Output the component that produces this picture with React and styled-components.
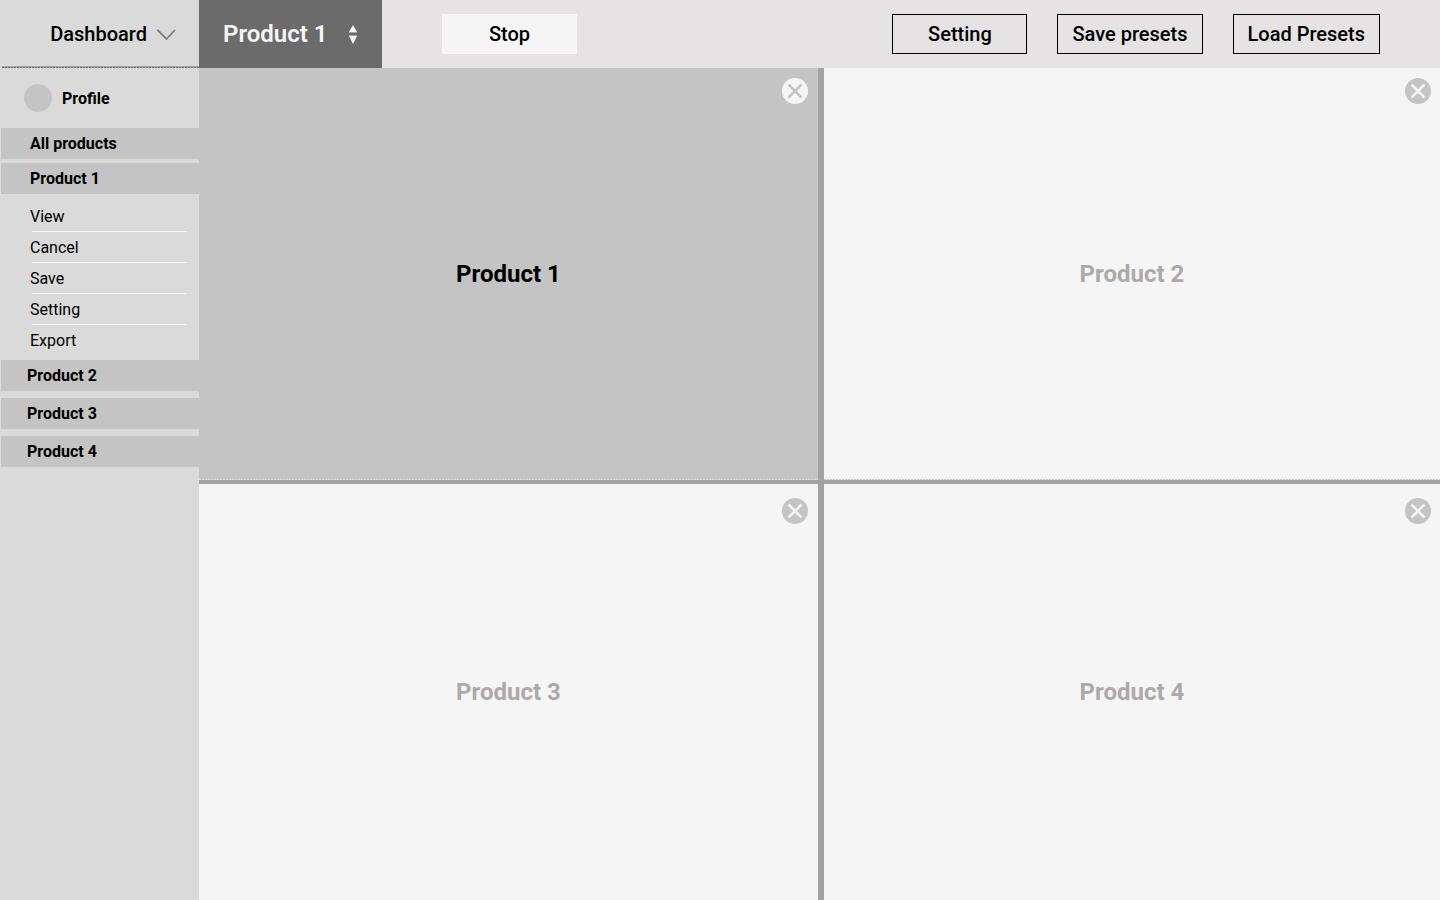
import styled, { createGlobalStyle } from "styled-components";
import { useState } from "react";

const GlobalStyle = createGlobalStyle`
  * {
    box-sizing: border-box;
  }
  body {
    margin: 0;
    font-family: Roboto, "Liberation Sans", sans-serif;
    color: #000;
    background-color: #dadada;
  }
  button {
    font-family: inherit;
    color: inherit;
    padding: 0;
    border: none;
    background: none;
    cursor: pointer;
  }
  ul {
    list-style: none;
    margin: 0;
    padding: 0;
  }
`

const Page = styled.div`
  display: grid;
  grid-template-columns: 199px 1fr;
  grid-template-rows: 68px 1fr;
  min-height: 100vh;
`

const DashboardButton = styled.button`
  display: flex;
  align-items: center;
  justify-content: flex-end;
  gap: 9px;
  padding-right: 23px;
  margin-left: 2px;
  font-size: 20px;
  font-weight: 500;
  background: repeating-linear-gradient(90deg, #6f6868 0 2px, #a9a3a3 2px 3px) bottom / 100% 1px no-repeat,
    linear-gradient(#a9a3a3, #a9a3a3) bottom / 100% 2px no-repeat;
`

const Topbar = styled.header`
  display: flex;
  align-items: center;
  padding-right: 60px;
  background-color: #e5e3e4;
`

const ProductPicker = styled.button`
  display: flex;
  align-items: center;
  align-self: stretch;
  justify-content: space-between;
  width: 183px;
  padding: 0 24px;
  font-size: 24px;
  font-weight: 600;
  color: #f5f5f5;
  background-color: #6b6b6b;
`

const StopButton = styled.button`
  width: 135px;
  height: 40px;
  margin-left: 60px;
  font-size: 20px;
  font-weight: 500;
  background-color: #f5f5f5;
`

const Actions = styled.div`
  display: flex;
  gap: 30px;
  margin-left: auto;
`

const ActionButton = styled.button`
  min-width: 135px;
  height: 40px;
  padding: 0 14px;
  font-size: 20px;
  font-weight: 500;
  border: 1px solid #000;
`

const Sidebar = styled.nav`
  padding-left: 1px;
`

const Profile = styled.a`
  display: flex;
  align-items: center;
  gap: 10px;
  height: 60px;
  padding-left: 23px;
  font-size: 16px;
  font-weight: 700;
  color: inherit;
  text-decoration: none;
`

const Avatar = styled.span`
  width: 28px;
  height: 28px;
  border-radius: 50%;
  background-color: #c4c4c4;
`

const MenuList = styled.ul`
  display: grid;
  gap: ${(props) => props.$gap}px;
`

const MenuButton = styled.button`
  display: block;
  width: 100%;
  height: 31px;
  padding-left: ${(props) => props.$indent}px;
  font-size: 16px;
  font-weight: 700;
  text-align: left;
  background-color: #c4c4c4;
`

const SubMenu = styled.ul`
  padding: 7px 12px 4px 29px;
`

const SubItem = styled.li`
  height: 31px;
  &:not(:last-child)::after {
    content: "";
    display: block;
    height: 1px;
    margin-left: 2px;
    background-color: #f5f5f5;
  }
`

const SubButton = styled.button`
  display: block;
  width: 100%;
  height: 30px;
  font-size: 16px;
  text-align: left;
`

const Board = styled.main`
  display: grid;
  grid-template-columns: 619fr 616fr;
  grid-template-rows: 412fr 416fr;
  gap: 4px 6px;
  background-color: #a2a2a2;
`

const Tile = styled.section`
  position: relative;
  display: flex;
  align-items: center;
  justify-content: center;
  color: ${(props) => props.$active ? "#000" : "#aea9a9"};
  background-color: ${(props) => props.$active ? "#c4c4c4" : "#f5f5f5"};
  &:nth-child(-n + 2) {
    background-image: repeating-linear-gradient(90deg, ${(props) => props.$active ? "#dedede" : "#c4c4c4"} 0 2px, transparent 2px 3px);
    background-position: bottom;
    background-size: 100% 1px;
    background-repeat: no-repeat;
  }
`

const TileTitle = styled.h2`
  margin: 0;
  font-size: 24px;
  font-weight: 700;
`

const CloseButton = styled.button`
  position: absolute;
  top: ${(props) => props.$top}px;
  right: ${(props) => props.$right}px;
  display: flex;
  color: ${(props) => props.$active ? "#f5f5f5" : "#c4c4c4"};
`

const ChevronIcon = () => (
    <svg width="20" height="12" viewBox="0 0 20 12" fill="none" stroke="#7f7f7f" strokeWidth="1.8" aria-hidden="true">
        <path d="M1.5 2L10.5 11L19 2" />
    </svg>
)

const SortIcon = () => (
    <svg width="10" height="20" viewBox="0 0 10 20" fill="currentColor" aria-hidden="true">
        <path d="M5 1L9 8H1Z" />
        <path d="M5 20L9 12H1Z" />
        <path d="M1 8H9V9H1ZM1 11H9V12H1Z" fill="#a9a3a3" />
    </svg>
)

const CloseIcon = ({ cross }) => (
    <svg width="26" height="26" viewBox="0 0 26 26" aria-hidden="true">
        <circle cx="13" cy="13" r="13" fill="currentColor" />
        <path d="M6.5 6.5L19.5 19.5M19.5 6.5L6.5 19.5" stroke={cross} strokeWidth="2.5" />
    </svg>
)

const subItems = ["View", "Cancel", "Save", "Setting", "Export"]

const tiles = [
    { name: "Product 1", top: 10, right: 10 },
    { name: "Product 2", top: 10, right: 9 },
    { name: "Product 3", top: 14, right: 10 },
    { name: "Product 4", top: 14, right: 9 },
]

export default function App() {

    const [selected, setSelected] = useState("Product 1")

    return (
        <>
            <GlobalStyle />
            <Page>
                <DashboardButton>Dashboard<ChevronIcon /></DashboardButton>
                <Topbar>
                    <ProductPicker>{selected}<SortIcon /></ProductPicker>
                    <StopButton>Stop</StopButton>
                    <Actions>
                        <ActionButton>Setting</ActionButton>
                        <ActionButton>Save presets</ActionButton>
                        <ActionButton>Load Presets</ActionButton>
                    </Actions>
                </Topbar>
                <Sidebar>
                    <Profile href="#profile"><Avatar />Profile</Profile>
                    <MenuList $gap={4}>
                        <li><MenuButton $indent={29}>All products</MenuButton></li>
                        <li>
                            <MenuButton $indent={29} onClick={() => setSelected("Product 1")}>Product 1</MenuButton>
                            <SubMenu>
                                {subItems.map((item) => (
                                    <SubItem key={item}><SubButton>{item}</SubButton></SubItem>
                                ))}
                            </SubMenu>
                        </li>
                    </MenuList>
                    <MenuList $gap={7}>
                        {tiles.slice(1).map(({ name }) => (
                            <li key={name}><MenuButton $indent={26} onClick={() => setSelected(name)}>{name}</MenuButton></li>
                        ))}
                    </MenuList>
                </Sidebar>
                <Board>
                    {tiles.map(({ name, top, right }) => (
                        <Tile key={name} $active={name === selected}>
                            <TileTitle>{name}</TileTitle>
                            <CloseButton $active={name === selected} $top={top} $right={right} aria-label={`Close ${name}`}>
                                <CloseIcon cross={name === selected ? "#c4c4c4" : "#f5f5f5"} />
                            </CloseButton>
                        </Tile>
                    ))}
                </Board>
            </Page>
        </>
    )
}
